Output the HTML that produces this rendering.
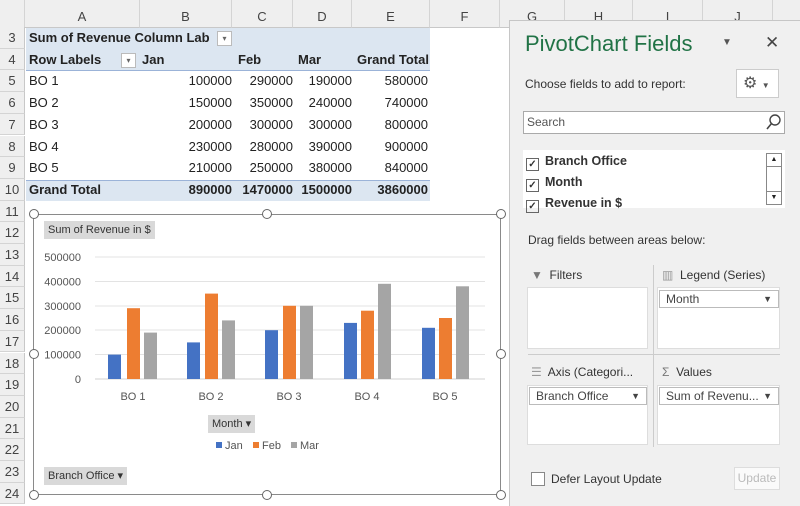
<!DOCTYPE html>
<html><head><style>
*{margin:0;padding:0;box-sizing:border-box}
body{width:800px;height:506px;overflow:hidden;background:#fff;font-family:"Liberation Sans",sans-serif;position:relative;font-size:13px;color:#222}
.a{position:absolute}
.ch{position:absolute;top:0;height:28px;background:#efefef;border-right:1px solid #d4d4d4;border-bottom:1px solid #c8c8c8;text-align:center;line-height:34px;color:#444;font-size:13px}
.rh{position:absolute;left:0;width:25px;height:21.7px;background:#efefef;border-bottom:1px solid #d4d4d4;border-right:1px solid #c8c8c8;text-align:center;color:#444;font-size:13px;line-height:22px}
.t{position:absolute;height:21.7px;line-height:22px;white-space:nowrap}
.r{text-align:right}
.b{font-weight:bold}
.hd{position:absolute;width:10px;height:10px;border:1.5px solid #666;border-radius:50%;background:#fff}
.btn{position:absolute;background:#d9d9d9;font-size:11px;line-height:18px;padding:0 4px;color:#333}
.pn{font-size:12px;color:#333}
.box{position:absolute;background:#fff;border:1px solid #ddd}
.fd{position:absolute;background:#fff;border:1px solid #bbb;font-size:12px;line-height:16px;padding-left:6px;color:#444}
</style></head><body>
<!-- column headers -->
<div class="ch" style="left:0;width:25px"></div>
<div class="ch" style="left:25px;width:115px">A</div>
<div class="ch" style="left:140px;width:92px">B</div>
<div class="ch" style="left:232px;width:61px">C</div>
<div class="ch" style="left:293px;width:59px">D</div>
<div class="ch" style="left:352px;width:78px">E</div>
<div class="ch" style="left:430px;width:70px">F</div>
<div class="ch" style="left:500px;width:65px">G</div>
<div class="ch" style="left:565px;width:68px">H</div>
<div class="ch" style="left:633px;width:70px">I</div>
<div class="ch" style="left:703px;width:70px">J</div>
<div class="ch" style="left:773px;width:30px"></div>
<!-- row headers -->
<div class="rh" style="top:27px">3</div><div class="rh" style="top:48.7px">4</div><div class="rh" style="top:70.4px">5</div><div class="rh" style="top:92.1px">6</div><div class="rh" style="top:113.8px">7</div><div class="rh" style="top:135.5px">8</div><div class="rh" style="top:157.2px">9</div><div class="rh" style="top:178.9px">10</div><div class="rh" style="top:200.6px">11</div><div class="rh" style="top:222.3px">12</div><div class="rh" style="top:244px">13</div><div class="rh" style="top:265.7px">14</div><div class="rh" style="top:287.4px">15</div><div class="rh" style="top:309.1px">16</div><div class="rh" style="top:330.8px">17</div><div class="rh" style="top:352.5px">18</div><div class="rh" style="top:374.2px">19</div><div class="rh" style="top:395.9px">20</div><div class="rh" style="top:417.6px">21</div><div class="rh" style="top:439.3px">22</div><div class="rh" style="top:461px">23</div><div class="rh" style="top:482.7px">24</div>
<!-- pivot table -->
<div class="a" style="left:26px;top:28px;width:404px;height:43px;background:#dce6f1;border-bottom:1px solid #9bb3d8"></div>
<div class="a" style="left:26px;top:180px;width:404px;height:21px;background:#dce6f1;border-top:1px solid #9bb3d8"></div>
<div class="t b" style="left:29px;top:27px">Sum of Revenue Column Lab</div>
<div class="a" style="left:217px;top:31px;width:15px;height:15px;background:#fff;border:1px solid #bbb;font-size:8px;text-align:center;line-height:13px;color:#666">▾</div>
<div class="t b" style="left:29px;top:49px">Row Labels</div>
<div class="a" style="left:121px;top:53px;width:15px;height:15px;background:#fff;border:1px solid #bbb;font-size:8px;text-align:center;line-height:13px;color:#666">▾</div>
<div class="t b" style="left:142px;top:49px">Jan</div>
<div class="t b" style="left:238px;top:49px">Feb</div>
<div class="t b" style="left:298px;top:49px">Mar</div>
<div class="t b" style="left:357px;top:49px">Grand Total</div>
<div id="rows"></div>
<div class="t" style="left:29px;top:70.4px">BO 1</div><div class="t r" style="left:140px;width:92px;top:70.4px">100000</div><div class="t r" style="left:232px;width:61px;top:70.4px">290000</div><div class="t r" style="left:293px;width:59px;top:70.4px">190000</div><div class="t r" style="left:352px;width:76px;top:70.4px">580000</div>
<div class="t" style="left:29px;top:92.1px">BO 2</div><div class="t r" style="left:140px;width:92px;top:92.1px">150000</div><div class="t r" style="left:232px;width:61px;top:92.1px">350000</div><div class="t r" style="left:293px;width:59px;top:92.1px">240000</div><div class="t r" style="left:352px;width:76px;top:92.1px">740000</div>
<div class="t" style="left:29px;top:113.8px">BO 3</div><div class="t r" style="left:140px;width:92px;top:113.8px">200000</div><div class="t r" style="left:232px;width:61px;top:113.8px">300000</div><div class="t r" style="left:293px;width:59px;top:113.8px">300000</div><div class="t r" style="left:352px;width:76px;top:113.8px">800000</div>
<div class="t" style="left:29px;top:135.5px">BO 4</div><div class="t r" style="left:140px;width:92px;top:135.5px">230000</div><div class="t r" style="left:232px;width:61px;top:135.5px">280000</div><div class="t r" style="left:293px;width:59px;top:135.5px">390000</div><div class="t r" style="left:352px;width:76px;top:135.5px">900000</div>
<div class="t" style="left:29px;top:157.2px">BO 5</div><div class="t r" style="left:140px;width:92px;top:157.2px">210000</div><div class="t r" style="left:232px;width:61px;top:157.2px">250000</div><div class="t r" style="left:293px;width:59px;top:157.2px">380000</div><div class="t r" style="left:352px;width:76px;top:157.2px">840000</div>
<div class="t b" style="left:29px;top:179px">Grand Total</div><div class="t r b" style="left:140px;width:92px;top:179px">890000</div><div class="t r b" style="left:232px;width:61px;top:179px">1470000</div><div class="t r b" style="left:293px;width:59px;top:179px">1500000</div><div class="t r b" style="left:352px;width:76px;top:179px">3860000</div>
<!-- chart -->
<div class="a" style="left:33px;top:214px;width:468px;height:281px;background:#fff;border:1.5px solid #8a8a8a"></div>
<svg class="a" style="left:0;top:0" width="510" height="506">
<g stroke="#e3e3e3" stroke-width="1">
<line x1="95" y1="257" x2="485" y2="257"/><line x1="95" y1="281.5" x2="485" y2="281.5"/><line x1="95" y1="306" x2="485" y2="306"/><line x1="95" y1="330" x2="485" y2="330"/><line x1="95" y1="354.5" x2="485" y2="354.5"/></g>
<line x1="95" y1="379" x2="485" y2="379" stroke="#d0d0d0"/>
<g font-family="Liberation Sans" font-size="11" fill="#555" text-anchor="end">
<text x="81" y="261">500000</text><text x="81" y="285.5">400000</text><text x="81" y="310">300000</text><text x="81" y="334">200000</text><text x="81" y="358.5">100000</text><text x="81" y="383">0</text></g>
<g id="bars">
<rect x="108" y="354.6" width="13" height="24.4" fill="#4472c4"/><rect x="127" y="308.2" width="13" height="70.8" fill="#ed7d31"/><rect x="144" y="332.6" width="13" height="46.4" fill="#a5a5a5"/>
<rect x="187" y="342.4" width="13" height="36.6" fill="#4472c4"/><rect x="205" y="293.6" width="13" height="85.4" fill="#ed7d31"/><rect x="222" y="320.4" width="13" height="58.6" fill="#a5a5a5"/>
<rect x="265" y="330.2" width="13" height="48.8" fill="#4472c4"/><rect x="283" y="305.8" width="13" height="73.2" fill="#ed7d31"/><rect x="300" y="305.8" width="13" height="73.2" fill="#a5a5a5"/>
<rect x="344" y="322.9" width="13" height="56.1" fill="#4472c4"/><rect x="361" y="310.7" width="13" height="68.3" fill="#ed7d31"/><rect x="378" y="283.8" width="13" height="95.2" fill="#a5a5a5"/>
<rect x="422" y="327.8" width="13" height="51.2" fill="#4472c4"/><rect x="439" y="318" width="13" height="61" fill="#ed7d31"/><rect x="456" y="286.3" width="13" height="92.7" fill="#a5a5a5"/>
</g>
<g font-family="Liberation Sans" font-size="11" fill="#555" text-anchor="middle">
<text x="133" y="400">BO 1</text><text x="211" y="400">BO 2</text><text x="289" y="400">BO 3</text><text x="367" y="400">BO 4</text><text x="445" y="400">BO 5</text></g>
<rect x="216" y="442" width="6" height="6" fill="#4472c4"/><rect x="253" y="442" width="6" height="6" fill="#ed7d31"/><rect x="291" y="442" width="6" height="6" fill="#a5a5a5"/>
<g font-family="Liberation Sans" font-size="11" fill="#555"><text x="225" y="449">Jan</text><text x="262" y="449">Feb</text><text x="300" y="449">Mar</text></g>
</svg>
<div class="btn" style="left:44px;top:221px">Sum of Revenue in $</div>
<div class="btn" style="left:208px;top:415px">Month ▾</div>
<div class="btn" style="left:44px;top:467px">Branch Office ▾</div>
<div class="hd" style="left:29px;top:209px"></div><div class="hd" style="left:262px;top:209px"></div><div class="hd" style="left:496px;top:209px"></div>
<div class="hd" style="left:29px;top:349px"></div><div class="hd" style="left:496px;top:349px"></div>
<div class="hd" style="left:29px;top:490px"></div><div class="hd" style="left:262px;top:490px"></div><div class="hd" style="left:496px;top:490px"></div>
<!-- pivot panel -->
<div class="a" style="left:509px;top:20px;width:291px;height:486px;background:#f0f0f0;border-left:1px solid #c6c6c6;border-top:1px solid #c6c6c6"></div>
<div class="a" style="left:525px;top:31px;font-size:22px;color:#217346">PivotChart Fields</div>
<div class="a" style="left:722px;top:37px;font-size:10px;color:#555">▼</div>
<div class="a" style="left:765px;top:33px;font-size:17px;color:#444">✕</div>
<div class="a pn" style="left:525px;top:77px">Choose fields to add to report:</div>
<div class="a" style="left:736px;top:69px;width:43px;height:29px;background:#fff;border:1px solid #ccc;font-size:16px;line-height:27px;padding-left:6px;color:#555">⚙ <span style="font-size:8px">▼</span></div>
<div class="a" style="left:523px;top:111px;width:262px;height:23px;background:#fff;border:1px solid #aaa;font-size:12px;line-height:21px;padding-left:3px;color:#555">Search</div>
<svg class="a" style="left:765px;top:113px" width="18" height="18"><circle cx="10" cy="7" r="5" fill="none" stroke="#444" stroke-width="1.4"/><line x1="6.5" y1="10.5" x2="2" y2="16" stroke="#444" stroke-width="1.6"/></svg>
<div class="a" style="left:523px;top:150px;width:262px;height:58px;background:#fff"></div>
<div class="a" style="left:526px;top:151px;line-height:21px;font-size:12.5px;font-weight:bold;color:#333">
<div><span style="display:inline-block;width:13px;height:13px;border:1px solid #666;font-size:10px;line-height:11px;text-align:center;vertical-align:-2px;margin-right:6px">✓</span>Branch Office</div>
<div><span style="display:inline-block;width:13px;height:13px;border:1px solid #666;font-size:10px;line-height:11px;text-align:center;vertical-align:-2px;margin-right:6px">✓</span>Month</div>
<div><span style="display:inline-block;width:13px;height:13px;border:1px solid #666;font-size:10px;line-height:11px;text-align:center;vertical-align:-2px;margin-right:6px">✓</span>Revenue in $</div></div>
<div class="a" style="left:766px;top:153px;width:16px;height:52px;border:1px solid #888;background:#fff"></div>
<div class="a" style="left:766px;top:153px;width:16px;height:14px;border:1px solid #888;font-size:7px;text-align:center;line-height:12px">▲</div>
<div class="a" style="left:766px;top:191px;width:16px;height:14px;border:1px solid #888;font-size:7px;text-align:center;line-height:12px">▼</div>
<div class="a pn" style="left:528px;top:233px">Drag fields between areas below:</div>
<div class="a" style="left:653px;top:265px;width:1px;height:182px;background:#ccc"></div>
<div class="a" style="left:528px;top:354px;width:252px;height:1px;background:#ccc"></div>
<div class="a pn" style="left:531px;top:268px"><span style="color:#777">▼</span>&nbsp; Filters</div>
<div class="a pn" style="left:662px;top:268px"><span style="color:#999">▥</span>&nbsp; Legend (Series)</div>
<div class="a pn" style="left:531px;top:365px"><span style="color:#999">☰</span>&nbsp; Axis (Categori...</div>
<div class="a pn" style="left:662px;top:365px"><span style="color:#777">Σ</span>&nbsp; Values</div>
<div class="box" style="left:527px;top:287px;width:121px;height:62px"></div>
<div class="box" style="left:657px;top:287px;width:123px;height:62px"></div>
<div class="box" style="left:527px;top:385px;width:121px;height:60px"></div>
<div class="box" style="left:657px;top:385px;width:123px;height:60px"></div>
<div class="fd" style="left:659px;top:290px;width:120px">Month<span style="position:absolute;right:6px;font-size:9px">▼</span></div>
<div class="fd" style="left:529px;top:387px;width:118px">Branch Office<span style="position:absolute;right:6px;font-size:9px">▼</span></div>
<div class="fd" style="left:659px;top:387px;width:120px">Sum of Revenu...<span style="position:absolute;right:6px;font-size:9px">▼</span></div>
<div class="a" style="left:531px;top:472px;width:14px;height:14px;background:#fff;border:1px solid #888"></div>
<div class="a pn" style="left:551px;top:472px">Defer Layout Update</div>
<div class="a" style="left:734px;top:467px;width:46px;height:23px;background:#fafafa;border:1px solid #ddd;font-size:12px;color:#bbb;text-align:center;line-height:21px">Update</div>
</body></html>
